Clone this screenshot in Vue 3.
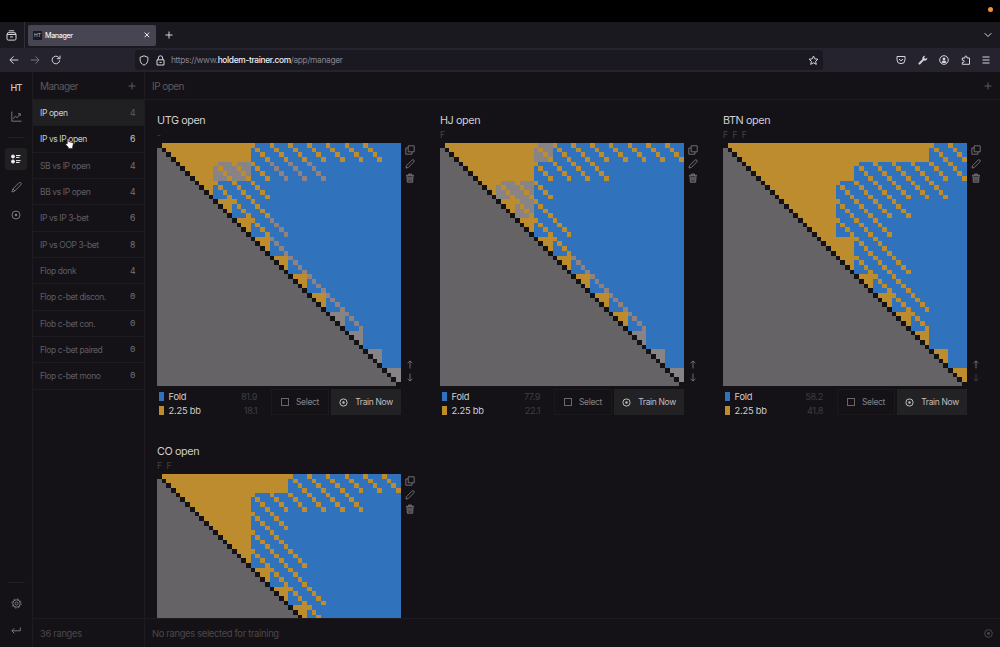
<script setup>
const items = [
  ['IP open', 4], ['IP vs IP open', 6], ['SB vs IP open', 4], ['BB vs IP open', 4],
  ['IP vs IP 3-bet', 6], ['IP vs OOP 3-bet', 8], ['Flop donk', 4], ['Flop c-bet discon.', 0],
  ['Flob c-bet con.', 0], ['Flop c-bet paired', 0], ['Flop c-bet mono', 0]
]

const ORANGE = '#bc8c2f'
const MIXED = '#888384'
const MIXED_SUITED = '#8f8281'

// One string per rank, from the pair to the right.
// o: raise all, s: raise suited only, m: mixed offsuit with suited raise,
// g: mixed suited only, x: everything mixed, .: fold
const ranges = [
  {
    name: 'UTG open', path: '-', fold: '81.9', raise: '18.1', down: true,
    rows: ['ooooosssssss.', 'oommsggg', 'osss', 'oss', 'osg', 'og', 'og', 'og', 'og', 'xg', 'x', 'x', 'x']
  },
  {
    name: 'HJ open', path: 'F', fold: '77.9', raise: '22.1', down: true,
    rows: ['ooooomsssssss', 'oooossss', 'omms', 'oms', 'oss', 'os', 'og', 'og', 'og', 'og', 'x', 'x', 'x']
  },
  {
    name: 'BTN open', path: 'F F F', fold: '58.2', raise: '41.8', down: false,
    rows: ['oooooooooooss', 'oooooossssss', 'oooossssss', 'ooossss', 'oosss', 'ooss', 'osss', 'oss', 'oss', 'os', 'o', 'o', 'o']
  },
  {
    name: 'CO open', path: 'F F', down: true,
    rows: ['ooooooossssss', 'oooossssss', 'oooss', 'ooss', 'osss', 'oss', 'oss', 'os', 'os', 'os', 'o', 'o', 'o']
  }
].map(r => ({ ...r, cells: toCells(r.rows) }))

function toCells(rows) {
  const out = []
  rows.forEach((row, i) => {
    ;[...row].forEach((c, k) => {
      const x = (i + k) * 4
      const y = i * 4
      if (c === 'o') out.push({ x, y, s: 4, fill: ORANGE })
      if (c === 'x' || c === 'm') out.push({ x, y, s: 4, fill: MIXED })
      if (c === 's' || c === 'm' || c === 'g') {
        for (let d = 0; d < 4; d++) {
          out.push({ x: x + d, y: y + d, s: 1, fill: c === 'g' ? MIXED_SUITED : ORANGE })
        }
      }
    })
  })
  return out
}

const stairs = 'M0 0V52H52' + Array.from({ length: 52 }, (_, i) => `V${51 - i}H${51 - i}`).join('') + 'Z'
</script>

<template>
  <div class="screen">
    <div class="menubar"><i class="rec"></i></div>

    <div class="tabs">
      <div class="recent">
        <svg width="11" height="11" viewBox="0 0 11 11"><path d="M2.8 .8h5.4M1 4.300L1.800 2.700h7.400L10 4.300v4.500a1.300 1.300 0 0 1-1.300 1.300H2.300A1.300 1.300 0 0 1 1 8.800zM1 4.500h9M4 6.900h3" /></svg>
      </div>
      <div class="tab">
        <span class="fav">HT</span><span class="tabname">Manager</span>
        <svg width="6" height="6" viewBox="0 0 6 6"><path d="M.6 .6l4.600 4.600M5.200 .6L.6 5.200" /></svg>
      </div>
      <svg class="newtab" width="8" height="8" viewBox="0 0 8 8"><path d="M4 .5v7M.5 4h7" /></svg>
      <svg class="chev" width="8" height="6" viewBox="0 0 8 6"><path d="M.7 1.200L4 4.500l3.300-3.300" /></svg>
    </div>

    <div class="toolbar">
      <div class="nav">
        <svg width="10" height="10" viewBox="0 0 10 10"><path d="M9.300 5H1M4.600 1.300L.9 5l3.700 3.700" /></svg>
        <svg class="dim" width="10" height="10" viewBox="0 0 10 10"><path d="M.7 5H9M5.400 1.300L9.100 5 5.400 8.700" /></svg>
        <svg width="10" height="10" viewBox="0 0 10 10"><path d="M8.700 5.300a3.800 3.800 0 1 1-1.100-3L8.600 3.400M9 .6v3.100H5.900" /></svg>
      </div>
      <div class="url">
        <svg width="10" height="11" viewBox="0 0 10 11"><path d="M5 .8l3.900 1.500v2.400C8.900 7.200 7.400 9.200 5 10.200 2.600 9.200 1.100 7.200 1.100 4.700V2.300z" /></svg>
        <svg width="9" height="11" viewBox="0 0 9 11"><path d="M1 4.800h7v5.200H1zM2.300 4.800V3a2.200 2.200 0 0 1 4.400 0v1.800M3.500 7.400h2" /></svg>
        <span class="addr">https://www.<b>holdem-trainer.com</b>/app/manager</span>
        <svg width="11" height="11" viewBox="0 0 11 11"><path d="M5.500 1l1.300 2.900 3.100.3-2.300 2.100.7 3.100-2.800-1.600-2.800 1.600.7-3.100L1.100 4.200l3.100-.3z" /></svg>
      </div>
      <div class="tools">
        <svg width="10" height="10" viewBox="0 0 10 10"><path d="M1 1.500h8v3.200a4 4 0 0 1-8 0zM3 4l2 1.900L7 4" /></svg>
        <svg width="10" height="10" viewBox="0 0 10 10"><path class="solid" d="M.6 8L4.400 4.300C4 2.300 5.300.6 7.300.7L6.200 2.300l.3 1.200 1.200.3L9.300 2.700C9.500 4.700 7.700 6 5.700 5.600L2 9.400C1 10 0 9 .6 8z" /></svg>
        <svg width="10" height="10" viewBox="0 0 10 10"><circle cx="5" cy="5" r="4.300" /><circle class="solid" cx="5" cy="3.900" r="1.500" /><path class="solid" d="M2.400 7.200Q2.700 5.800 5 5.800t2.600 1.400Q5 9 2.400 7.200z" /></svg>
        <svg width="10" height="10" viewBox="0 0 10 10"><path d="M1.300 3h2.600V2a1 1 0 0 1 2 0v1h2.600v6.300H1.300V7.400h.8a1 1 0 0 0 0-2.200h-.8z" /></svg>
        <svg width="8" height="10" viewBox="0 0 8 10"><path d="M.5 2h7M.5 5h7M.5 8h7" /></svg>
      </div>
    </div>

    <div class="app">
      <aside class="rail">
        <div class="logo">HT</div>
        <div class="ric"><svg width="11" height="11" viewBox="0 0 11 11"><path d="M.8 .5v9.700h9.700M2.300 7.800l2-2.600 1.900 1.500 3-3.800M7 2.700h2.300v2.300" /></svg></div>
        <hr />
        <div class="ric on"><svg width="10" height="10" viewBox="0 0 10 10"><circle class="fill" cx="2" cy="2.500" r="1.500" /><circle class="fill" cx="2" cy="7.500" r="1.500" /><path d="M5 1.500h4.500M5 3.400h3.500M5 6.600h4.500M5 8.500h3.500" /></svg></div>
        <div class="ric"><svg width="11" height="11" viewBox="0 0 11 11"><path d="M1 10l.6-2.700L7.800.9a1.300 1.300 0 0 1 2 1.900L3.500 9.300zM2 7l2 2" /></svg></div>
        <div class="ric"><svg width="10" height="10" viewBox="0 0 10 10"><circle cx="5" cy="5" r="4" /><circle class="solid" cx="5" cy="5" r="1.300" /></svg></div>
        <div class="railend">
          <hr />
          <div class="ric"><svg width="11" height="11" viewBox="0 0 11 11"><circle cx="5.500" cy="5.500" r="3.700" /><circle cx="5.500" cy="5.500" r="4.600" stroke-dasharray="1.8 1.810" /><circle cx="5.500" cy="5.500" r="1.500" /></svg></div>
          <div class="ric"><svg width="10" height="8" viewBox="0 0 10 8"><path d="M9.300 .5v3.300H1M3.300 1.300L.8 3.800l2.500 2.500" /></svg></div>
        </div>
      </aside>

      <nav class="list">
        <div class="head">Manager<svg width="8" height="8" viewBox="0 0 8 8"><path d="M4 .5v7M.5 4h7" /></svg></div>
        <div v-for="(it, i) in items" :key="i" class="item" :class="{ sel: i === 0, hov: i === 1 }">
          <span>{{ it[0] }}</span><span class="num" :class="{ zero: it[1] === 0 }">{{ it[1] }}</span>
        </div>
        <div class="foot">36 ranges</div>
      </nav>

      <main class="main">
        <div class="head">IP open<svg width="8" height="8" viewBox="0 0 8 8"><path d="M4 .5v7M.5 4h7" /></svg></div>
        <div class="cards">
          <section v-for="r in ranges" :key="r.name" class="card">
            <h2>{{ r.name }}</h2>
            <div class="path">{{ r.path }}</div>
            <div class="row">
              <svg class="chart" viewBox="0 0 52 52" preserveAspectRatio="none">
                <rect width="52" height="52" fill="#3172bc" />
                <rect v-for="(c, i) in r.cells" :key="i" :x="c.x" :y="c.y" :width="c.s" :height="c.s" :fill="c.fill" />
                <path :d="stairs" fill="#656366" />
                <rect v-for="n in 52" :key="'d' + n" :x="n - 1" :y="n - 1" width="1" height="1" fill="#131214" />
              </svg>
              <div class="side">
                <svg width="10" height="10" viewBox="0 0 10 10"><path d="M3.200 .8h6v6h-6zM3 3H.8v6.200H7V7" /></svg>
                <svg width="10" height="10" viewBox="0 0 10 10"><path d="M1 9l.5-2.300L7 1.100a1.200 1.200 0 0 1 1.800 1.800L3.300 8.500z" /></svg>
                <svg class="bin" width="10" height="10" viewBox="0 0 10 10"><path d="M1 2.300h8M3.500 2.200V1h3v1.200M1.900 2.500l.5 6.700h5.200l.5-6.700M4 4v3.500M6 4v3.500" /></svg>
                <span class="gap"></span>
                <svg width="8" height="9" viewBox="0 0 8 9"><path d="M4 8.500V1M1.600 3.200L4 .9l2.400 2.300" /></svg>
                <svg :class="{ off: !r.down }" width="8" height="9" viewBox="0 0 8 9"><path d="M4 .5V8M1.600 5.800L4 8.100l2.400-2.300" /></svg>
              </div>
            </div>
            <div v-if="r.fold" class="under">
              <div class="legend">
                <div><i class="blue"></i>Fold<em>{{ r.fold }}</em></div>
                <div><i class="gold"></i>2.25 bb<em>{{ r.raise }}</em></div>
              </div>
              <div class="btn select"><i class="box"></i>Select</div>
              <div class="btn train"><svg width="9" height="9" viewBox="0 0 9 9"><circle cx="4.500" cy="4.500" r="3.600" /><circle class="solid" cx="4.500" cy="4.500" r="1.200" /></svg>Train Now</div>
            </div>
          </section>
        </div>
        <div class="foot">No ranges selected for training<svg width="9" height="9" viewBox="0 0 9 9"><circle cx="4.500" cy="4.500" r="3.800" /><circle class="solid" cx="4.500" cy="4.500" r="1.400" /></svg></div>
      </main>
    </div>

    <svg class="hand" width="9" height="11" viewBox="0 0 9 11"><path d="M2.300 5.800V1.200a.8.8 0 0 1 1.500 0v2.600l3.500.6q1.200.3 1 1.500L7.600 9v1.500H3.300V9.300L.7 6.500Q.9 5.300 2.300 5.800z" /></svg>
  </div>
</template>

<style>
body { background: #000; overflow: hidden; }
</style>

<style scoped>
* { box-sizing: border-box; }
.screen { position: relative; width: 1000px; height: 647px; display: flex; flex-direction: column; overflow: hidden; background: #141216; font-family: Inter, "Liberation Sans", sans-serif; }
svg { display: block; flex: none; fill: none; stroke: currentColor; stroke-width: 1; }
.menubar { height: 22px; background: #000; display: flex; justify-content: flex-end; padding: 7px 7px 0 0; }
.rec { width: 5px; height: 5px; border-radius: 50%; background: #f0943a; }
.tabs { height: 26px; display: flex; align-items: center; background: #1b1920; color: #d6d5da; }
.recent { width: 25px; height: 26px; padding-left: 6px; display: flex; align-items: center; border-right: 1px solid #302e37; }
.tab { margin-left: 3px; width: 128px; height: 21px; background: #474551; border-radius: 2px; display: flex; align-items: center; padding: 0 6px 0 5px; color: #f0f0f3; }
.fav { width: 9px; height: 9px; background: #1b1a1d; color: #c8c8c8; font-size: 5px; line-height: 9px; text-align: center; }
.tabname { font-size: 7.200px; font-weight: 500; margin-left: 3px; flex: 1; letter-spacing: -.4px; }
.newtab { margin-left: 9px; }
.chev { margin-left: auto; margin-right: 8px; }
.toolbar { height: 24px; background: #25242e; display: flex; align-items: center; color: #d6d5da; }
.nav { width: 135px; padding-left: 9px; display: flex; gap: 11px; }
.dim { opacity: .45; }
.url { width: 688px; height: 20px; background: #1a1820; border-radius: 3px; display: flex; align-items: center; padding: 0 4px; }
.url svg + svg { margin-left: 7px; }
.addr { margin-left: 6px; font-size: 8.400px; letter-spacing: -.33px; color: #86848d; flex: 1; }
.addr b { font-weight: 500; color: #f0eff4; }
.tools { margin-left: auto; margin-right: 10px; display: flex; gap: 11.400px; }
.solid { fill: currentColor; stroke: none; }
.fill { fill: currentColor; }
.app { flex: 1; min-height: 0; display: flex; font-family: Inter, "Liberation Sans", sans-serif; color: #5e5b60; }
.rail { width: 33px; border-right: 1px solid #1e1c20; display: flex; flex-direction: column; align-items: center; padding-top: 2px; }
.logo { height: 28px; line-height: 28px; font-size: 9px; font-weight: 500; color: #c9c8ca; letter-spacing: -.7px; }
.ric { width: 22px; height: 22px; margin: 3px 0; border-radius: 3px; display: flex; align-items: center; justify-content: center; color: #77747a; }
.rail hr { width: 17px; border: 0; border-top: 1px solid #211f23; margin: 7px 0 6px; }
.ric.on { background: #201f22; color: #eee; margin-top: 4px; }
.railend { margin-top: auto; display: flex; flex-direction: column; align-items: center; padding-bottom: 2px; }
.railend .ric { color: #7a777c; }
.list { width: 112px; border-right: 1px solid #1e1c20; display: flex; flex-direction: column; }
.head { height: 28px; flex: none; display: flex; align-items: center; justify-content: space-between; font-size: 10px; letter-spacing: -.55px; border-bottom: 1px solid #1e1c20; color: #5c595f; padding: 0 8px 0 7px; }
.item { height: 26.340px; flex: none; display: flex; align-items: center; justify-content: space-between; padding: 1px 9px 0 7px; font-size: 8.500px; letter-spacing: -.4px; border-bottom: 1px solid #1e1c20; color: #605d62; }
.num { font-size: 8.700px; width: 5px; text-align: center; color: #757278; letter-spacing: 0; }
.zero { font-family: "Liberation Mono", monospace; font-size: 9px; }
.sel { background: #201f22; color: #cfced1; }
.sel .num { color: #5f5c61; }
.hov, .hov .num { color: #c9c8cb; }
.foot { margin-top: auto; height: 29px; flex: none; border-top: 1px solid #1e1c20; display: flex; align-items: center; justify-content: space-between; font-size: 9.400px; letter-spacing: -.33px; padding: 0 7px; color: #4b484d; }
.main { flex: 1; min-width: 0; display: flex; flex-direction: column; }
.cards { flex: 1; min-height: 0; overflow: hidden; display: grid; grid-template-columns: repeat(3, 283px); grid-auto-rows: 331px; padding-left: 12px; }
.card { padding-top: 13px; min-width: 0; }
h2 { margin: 0; font-size: 10.800px; font-weight: 400; line-height: 15px; color: #cfced1; letter-spacing: -.4px; }
.path { height: 14.500px; line-height: 15px; font-size: 8.500px; color: #444146; word-spacing: 2px; }
.row { display: flex; height: 243.800px; }
.chart { width: 243.800px; height: 243.800px; stroke: none; shape-rendering: crispEdges; }
.side { width: 18px; display: flex; flex-direction: column; align-items: center; gap: 4px; padding: 2.500px 0 4px; color: #858287; }
.side svg { stroke-width: .8; }
.side .bin { fill: #39363b; }
.gap { flex: 1; }
.off { opacity: .45; }
.under { display: flex; width: 244px; margin-top: 3px; height: 27px; align-items: flex-start; }
.legend { width: 114px; padding-left: 2px; font-size: 9.300px; letter-spacing: -.2px; color: #cfced1; }
.legend div { display: flex; align-items: center; height: 14px; }
.legend i { width: 5px; height: 9px; margin-right: 4.500px; }
.legend em { font-style: normal; margin-left: auto; margin-right: 14px; color: #403d42; font-size: 9.200px; letter-spacing: -.4px; }
.blue { background: #3172bc; }
.gold { background: #bc8c2f; }
.btn { height: 26px; display: flex; align-items: center; justify-content: center; font-size: 8.500px; letter-spacing: -.35px; }
.select { width: 58px; margin-right: 2px; border: 1px solid #1b191c; color: #858287; }
.box { width: 8px; height: 8px; border: 1px solid #69666b; margin-right: 7px; }
.train { width: 70px; background: #222123; color: #c0bfc2; gap: 7px; white-space: nowrap; }
.hand { position: absolute; left: 65px; top: 138px; fill: #fff; stroke: #222; stroke-width: .6; }
</style>
